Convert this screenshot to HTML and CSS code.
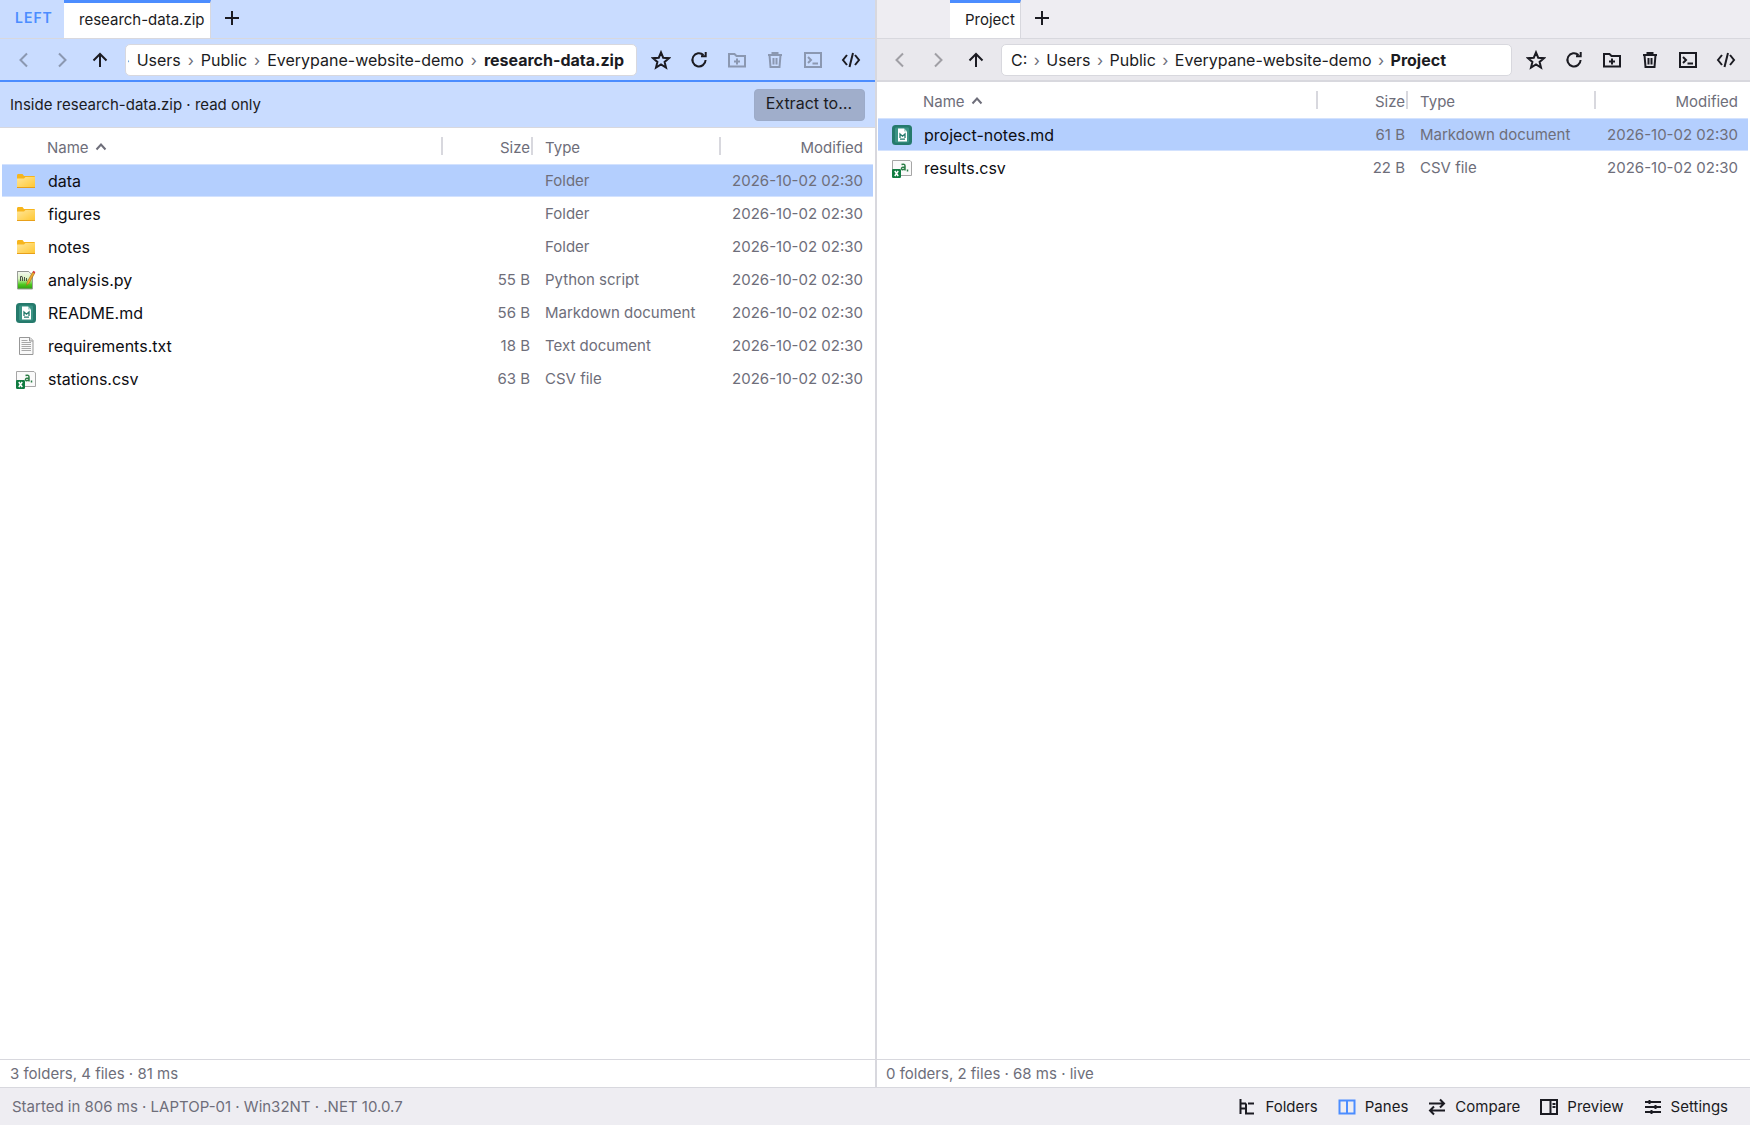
FILE: index.html
```
<!DOCTYPE html>
<html lang="en">
<head>
<meta charset="utf-8">
<title>Everypane</title>
<meta name="viewport" content="width=device-width, initial-scale=1">
<link rel="stylesheet" href="styles.css">
</head>
<body>
<svg class="sprite" aria-hidden="true">
  <defs>
    <linearGradient id="folder-fill" x1="0" y1="0" x2="1" y2="1"><stop offset="0" stop-color="#ffe69a"/><stop offset="1" stop-color="#ffc730"/></linearGradient>
    <linearGradient id="py-fill" x1="0" y1="0" x2="0" y2="1"><stop offset="0" stop-color="#f4f6f2"/><stop offset=".4" stop-color="#d9f2c0"/><stop offset=".75" stop-color="#4cc81e"/><stop offset="1" stop-color="#2f9a10"/></linearGradient>
  </defs>
  <symbol id="plus" viewBox="0 0 20 20"><path d="M10 3v14M3 10h14"/></symbol>
  <symbol id="back" viewBox="0 0 20 20"><path d="M13 3.5 6.5 10l6.500 6.500"/></symbol>
  <symbol id="forward" viewBox="0 0 20 20"><path d="M7 3.500 13.500 10 7 16.500"/></symbol>
  <symbol id="up" viewBox="0 0 20 20"><path d="M10 17V4.500M3.500 10.500 10 4l6.500 6.500"/></symbol>
  <symbol id="star" viewBox="0 0 20 20"><path d="m10 2.400 2.200 5.300 5.800.5-4.400 3.700 1.400 5.600-5-3.100-5 3.100 1.400-5.600L2 8.200l5.800-.5z"/></symbol>
  <symbol id="refresh" viewBox="0 0 20 20"><path d="M14.500 5A6.600 6.600 0 1 0 16.600 10M16.700 2v4.200H12"/></symbol>
  <symbol id="new-folder" viewBox="0 0 20 20"><path d="M2 4h5.500l2 2H18v10.500H2zM10 8.500v6M7 11.500h6"/></symbol>
  <symbol id="trash" viewBox="0 0 20 20"><path d="M3 5h14M7.500 5V3h5v2M4.500 5l1 12h9l1-12M8.500 8v6.500M11.500 8v6.500"/></symbol>
  <symbol id="terminal" viewBox="0 0 20 20"><path d="M2 3h16v14H2zM5 7l3 3-3 3M9.500 13.500H15"/></symbol>
  <symbol id="code" viewBox="0 0 20 20"><path d="M6 5 2 10l4 5M14 5l4 5-4 5M12 3 8.500 17"/></symbol>
  <symbol id="sort" viewBox="0 0 12 12"><path d="m1.500 8.500 4.500-5 4.500 5"/></symbol>
  <symbol id="tree" viewBox="0 0 20 20"><path d="M3.500 2v15M3.500 6.500H9M11 6.500h6M3.500 11.500H9M9 6.500v10h8"/></symbol>
  <symbol id="panes" viewBox="0 0 20 20"><path d="M2.500 3.500h15v13h-15zM10 3.500v13"/></symbol>
  <symbol id="compare" viewBox="0 0 20 20"><path d="M2 6.500h15M13 2.500l4 4-4 4M18 13.500H3M7 9.500l-4 4 4 4"/></symbol>
  <symbol id="preview" viewBox="0 0 20 20"><path d="M2 3h16v14H2zM11.500 3v14M13.500 7h3M13.500 10h3"/></symbol>
  <symbol id="settings" viewBox="0 0 20 20"><path d="M2 5h16M2 10h16M2 15h16M6.500 3v4M12.500 8v4M8.500 13v4"/></symbol>
  <symbol id="file-folder" viewBox="0 0 20 20"><path d="M1 4.500Q1 3 2 3h4.500L8 5h10q1 0 1 1v10H1z" fill="#f7b51c"/><path d="M1 7.500h7L9.500 6H19v10q0 .8-1 .8H2Q1 16.800 1 16z" fill="url(#folder-fill)"/><path d="M1 16.500h18" stroke="#e8a01a"/></symbol>
  <symbol id="file-md" viewBox="0 0 20 20"><rect width="20" height="20" rx="3.500" fill="#257a6c"/><rect x="3" y="2.500" width="14" height="15" rx="1" fill="#3b9384"/><path d="M6 3.500h6l3 3v10H6z" fill="#fff"/><path d="M12 3.500v3h3" fill="#a9d3cb"/><path d="M8 13v-4l2.500 2.200L13 9v4M8 14.200h5" fill="none" stroke="#257a6c" stroke-width="1.300"/></symbol>
  <symbol id="file-txt" viewBox="0 0 20 20"><path d="M3.500 1.500H14l3 3v14H3.500z" fill="#f9f9f9" stroke="#979797"/><path d="M13.500 1.500v3.500H17" fill="#ddd" stroke="#979797"/><path d="M5.500 4.500h6M5.500 6.500h9.500M5.500 8.500h9.500M5.500 10.500h9.500M5.500 12.500h9.500M5.500 14.500h9.500" stroke="#a8a8a8"/></symbol>
  <symbol id="file-csv" viewBox="0 0 20 20"><path d="M.5 2.500h17.500l1.500 1.500v13.500H.5z" fill="#fafafa" stroke="#a6a6a6"/><path d="M9.500 6.500q3.500-1 3.500 1.500v4.500M13 9q-3.800-.2-3.500 2 .8 1.700 3.500-.3M15.500 11.500v2" fill="none" stroke="#2b7d46" stroke-width="1.500"/><rect y="11" width="9" height="9" rx="1.200" fill="#107c41"/><path d="m2.800 13 3.400 5M6.200 13l-3.400 5" stroke="#fff" stroke-width="1.500"/></symbol>
  <symbol id="file-py" viewBox="0 0 20 20"><path d="M1.500 1.500h11l4 3.500v14H1.500z" fill="url(#py-fill)" stroke="#9a9f98"/><path d="M1.500 1.500h11" stroke="#888" stroke-dasharray="1 1"/><path d="M4.500 11V6.500q2-.8 2 1.500v3M8.500 7v4M10.500 8v3" fill="none" stroke="#4a4f48"/><path d="m10.500 15.500.7-3.500 5.500-10 2 1.200-5.500 10z" fill="#efa92d" stroke="#9a6a20" stroke-width=".6"/><path d="m16.600 2.200.8-1.400 2 1.200-.8 1.400z" fill="#d7373f"/></symbol>
</svg>

<main class="panes">
  <section class="pane pane-active" aria-label="Left pane">
    <div class="tabs">
      <span class="side side-left">LEFT</span>
      <a class="tab" href="#left">research-data.zip</a>
      <button class="icon-btn" aria-label="New tab"><svg><use href="#plus"/></svg></button>
    </div>
    <div class="toolbar">
      <button class="icon-btn" disabled aria-label="Back"><svg><use href="#back"/></svg></button>
      <button class="icon-btn" disabled aria-label="Forward"><svg><use href="#forward"/></svg></button>
      <button class="icon-btn" aria-label="Up"><svg><use href="#up"/></svg></button>
      <nav class="path path-end" aria-label="Path">
        <i>›</i><a href="#users">Users</a><i>›</i><a href="#public">Public</a><i>›</i><a href="#demo">Everypane-website-demo</a><i>›</i><a class="current" href="#left">research-data.zip</a>
      </nav>
      <button class="icon-btn" aria-label="Favorite"><svg><use href="#star"/></svg></button>
      <button class="icon-btn" aria-label="Refresh"><svg><use href="#refresh"/></svg></button>
      <button class="icon-btn" disabled aria-label="New folder"><svg><use href="#new-folder"/></svg></button>
      <button class="icon-btn" disabled aria-label="Delete"><svg><use href="#trash"/></svg></button>
      <button class="icon-btn" disabled aria-label="Terminal"><svg><use href="#terminal"/></svg></button>
      <button class="icon-btn" aria-label="Open in editor"><svg><use href="#code"/></svg></button>
    </div>
    <div class="banner"><span>Inside research-data.zip · read only</span><button class="extract">Extract to…</button></div>
    <div class="files">
      <table>
        <thead><tr><th class="name">Name <svg><use href="#sort"/></svg></th><th class="size">Size</th><th class="type">Type</th><th class="date">Modified</th></tr></thead>
        <tbody>
          <tr class="selected"><td class="name"><svg><use href="#file-folder"/></svg>data</td><td class="size"></td><td class="type">Folder</td><td class="date">2026-10-02 02:30</td></tr>
          <tr><td class="name"><svg><use href="#file-folder"/></svg>figures</td><td class="size"></td><td class="type">Folder</td><td class="date">2026-10-02 02:30</td></tr>
          <tr><td class="name"><svg><use href="#file-folder"/></svg>notes</td><td class="size"></td><td class="type">Folder</td><td class="date">2026-10-02 02:30</td></tr>
          <tr><td class="name"><svg><use href="#file-py"/></svg>analysis.py</td><td class="size">55 B</td><td class="type">Python script</td><td class="date">2026-10-02 02:30</td></tr>
          <tr><td class="name"><svg><use href="#file-md"/></svg>README.md</td><td class="size">56 B</td><td class="type">Markdown document</td><td class="date">2026-10-02 02:30</td></tr>
          <tr><td class="name"><svg><use href="#file-txt"/></svg>requirements.txt</td><td class="size">18 B</td><td class="type">Text document</td><td class="date">2026-10-02 02:30</td></tr>
          <tr><td class="name"><svg><use href="#file-csv"/></svg>stations.csv</td><td class="size">63 B</td><td class="type">CSV file</td><td class="date">2026-10-02 02:30</td></tr>
        </tbody>
      </table>
    </div>
    <div class="status">3 folders, 4 files · 81 ms</div>
  </section>

  <div class="divider"></div>

  <section class="pane" aria-label="Right pane">
    <div class="tabs">
      <span class="side side-right"></span>
      <a class="tab" href="#right">Project</a>
      <button class="icon-btn" aria-label="New tab"><svg><use href="#plus"/></svg></button>
    </div>
    <div class="toolbar">
      <button class="icon-btn" disabled aria-label="Back"><svg><use href="#back"/></svg></button>
      <button class="icon-btn" disabled aria-label="Forward"><svg><use href="#forward"/></svg></button>
      <button class="icon-btn" aria-label="Up"><svg><use href="#up"/></svg></button>
      <nav class="path" aria-label="Path">
        <a href="#c">C:</a><i>›</i><a href="#users">Users</a><i>›</i><a href="#public">Public</a><i>›</i><a href="#demo">Everypane-website-demo</a><i>›</i><a class="current" href="#right">Project</a>
      </nav>
      <button class="icon-btn" aria-label="Favorite"><svg><use href="#star"/></svg></button>
      <button class="icon-btn" aria-label="Refresh"><svg><use href="#refresh"/></svg></button>
      <button class="icon-btn" aria-label="New folder"><svg><use href="#new-folder"/></svg></button>
      <button class="icon-btn" aria-label="Delete"><svg><use href="#trash"/></svg></button>
      <button class="icon-btn" aria-label="Terminal"><svg><use href="#terminal"/></svg></button>
      <button class="icon-btn" aria-label="Open in editor"><svg><use href="#code"/></svg></button>
    </div>
    <div class="files">
      <table>
        <thead><tr><th class="name">Name <svg><use href="#sort"/></svg></th><th class="size">Size</th><th class="type">Type</th><th class="date">Modified</th></tr></thead>
        <tbody>
          <tr class="selected"><td class="name"><svg><use href="#file-md"/></svg>project-notes.md</td><td class="size">61 B</td><td class="type">Markdown document</td><td class="date">2026-10-02 02:30</td></tr>
          <tr><td class="name"><svg><use href="#file-csv"/></svg>results.csv</td><td class="size">22 B</td><td class="type">CSV file</td><td class="date">2026-10-02 02:30</td></tr>
        </tbody>
      </table>
    </div>
    <div class="status">0 folders, 2 files · 68 ms · live</div>
  </section>
</main>

<footer class="footer">
  <span class="info">Started in 806 ms · LAPTOP-01 · Win32NT · .NET 10.0.7</span>
  <button><svg><use href="#tree"/></svg>Folders</button>
  <button class="on"><svg><use href="#panes"/></svg>Panes</button>
  <button><svg><use href="#compare"/></svg>Compare</button>
  <button><svg><use href="#preview"/></svg>Preview</button>
  <button><svg><use href="#settings"/></svg>Settings</button>
</footer>
</body>
</html>
```
FILE: styles.css
```
:root {
  --accent: #4c8dff;
  --tint: #c9dcff;
  --select: #b4cffe;
  --line: #d8d8de;
  --text: #1b1b22;
  --muted: #6e6e7a;
}

* { box-sizing: border-box; }

body {
  margin: 0;
  height: 100vh;
  display: flex;
  flex-direction: column;
  background: #fff;
  color: var(--text);
  font: 15px/20px Inter, "Noto Sans", sans-serif;
}

button {
  padding: 0;
  border: 0;
  background: none;
  color: inherit;
  font: inherit;
}

a { color: inherit; text-decoration: none; }

svg {
  width: 20px;
  height: 20px;
  flex: none;
  fill: none;
  stroke: currentColor;
  stroke-width: 2;
}

td svg { stroke: none; stroke-width: 1; }

.sprite { position: absolute; width: 0; height: 0; }

.panes {
  flex: 1;
  min-height: 0;
  display: grid;
  grid-template-columns: 50% 1px minmax(0, 1fr);
}

/* The second pixel of the divider overlaps the right pane. */
.divider {
  position: relative;
  z-index: 1;
  background: var(--line);
  box-shadow: 1px 0 var(--line);
}

.pane { display: flex; flex-direction: column; min-width: 0; }

.tabs {
  display: flex;
  height: 39px;
  background: #eeedf2;
  border-bottom: 1px solid var(--line);
}

.side {
  padding-left: 15px;
  color: var(--accent);
  font-size: 14px;
  font-weight: 600;
  letter-spacing: 1px;
  line-height: 36px;
}

.side-left { width: 64px; }
.side-right { width: 74px; }

.tab {
  padding: 7px 5px 0 15px;
  border-top: 3px solid var(--accent);
  border-right: 1px solid var(--line);
  background: #fff;
}

.icon-btn {
  width: 38px;
  height: 36px;
  display: flex;
  align-items: center;
  justify-content: center;
}

.tabs .icon-btn { width: 42px; }

.icon-btn:disabled { opacity: .35; }

.toolbar {
  display: flex;
  align-items: center;
  height: 43px;
  padding: 0 5px;
  background: #e9e8ed;
  border-bottom: 2px solid var(--line);
}

.path {
  flex: 1;
  min-width: 0;
  height: 32px;
  margin: 0 5px 0 6px;
  padding: 0 10px 0 9px;
  display: flex;
  align-items: center;
  overflow: hidden;
  white-space: nowrap;
  background: #fff;
  border: 1px solid var(--line);
  border-radius: 5px;
  font-size: 16px;
}

/* A long path keeps its end in view and is cut at the left padding. */
.path-end {
  justify-content: flex-end;
  padding: 0 12px 0 2px;
  overflow: clip;
  overflow-clip-margin: content-box;
}

.path i {
  width: 19px;
  flex: none;
  text-align: center;
  font-style: normal;
  color: var(--muted);
}

.path-end i { width: 20px; }

.current { font-weight: 700; }

.pane-active .tabs,
.pane-active .toolbar,
.banner { background: var(--tint); }

.pane-active .toolbar { border-bottom-color: var(--accent); }

.banner {
  display: flex;
  align-items: center;
  justify-content: space-between;
  height: 46px;
  padding: 0 10px;
  border-bottom: 1px solid var(--line);
}

.extract {
  height: 32px;
  padding: 0 12px 3px 11px;
  background: #a0aecb;
  border: 1px solid #9cabc9;
  border-radius: 4px;
  font-size: 16px;
}

.files {
  flex: 1;
  min-height: 0;
  padding: 0 2px;
}

table {
  width: 100%;
  table-layout: fixed;
  border-spacing: 0;
}

th, td {
  padding: 0;
  text-align: left;
  font-weight: 400;
  color: var(--muted);
}

th { height: 36px; padding-top: 4px; }

th:not(.date) {
  background: linear-gradient(var(--line), var(--line)) right center / 2px 18px no-repeat;
}

th svg { width: 12px; height: 12px; margin-left: 2px; }

td {
  height: 33px;
  padding-top: 1px;
  border: solid transparent;
  border-width: 1px 0;
}

.selected td { background: var(--select); border-color: #d3e2fe; }

th.name { padding-left: 45px; }

td.name {
  padding-left: 14px;
  font-size: 16px;
  color: #0d0d12;
}

td.name svg { margin-right: 12px; vertical-align: -4px; }

.size { width: 90px; padding-right: 3px; text-align: right; }
.type { width: 188px; padding-left: 12px; }
.date { width: 152px; padding-right: 10px; text-align: right; }

.status {
  height: 28px;
  padding: 4px 10px;
  border-top: 1px solid var(--line);
  color: var(--muted);
}

.footer {
  display: flex;
  align-items: center;
  gap: 19px;
  height: 38px;
  padding: 0 22px 0 12px;
  background: #eeedf2;
  border-top: 1px solid var(--line);
}

.info { flex: 1; color: var(--muted); }

.footer button {
  display: flex;
  align-items: center;
  gap: 8px;
}

.on svg { color: var(--accent); }
```
